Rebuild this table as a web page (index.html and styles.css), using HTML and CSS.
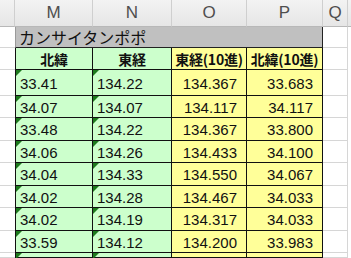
FILE: index.html
```html
<!DOCTYPE html>
<html lang="ja">
<head>
<meta charset="utf-8">
<link rel="stylesheet" href="styles.css">
</head>
<body>
<div class="sheet">
  <div class="ch corner"></div>
  <div class="ch">M</div>
  <div class="ch">N</div>
  <div class="ch">O</div>
  <div class="ch">P</div>
  <div class="ch">Q</div>
  <div class="ch rest"></div>

  <div class="lc"></div>
  <div class="title">カンサイタンポポ</div>
  <div class="q"></div>
  <div class="rest"></div>

  <div class="lc"></div>
  <div class="hd g first">北緯</div>
  <div class="hd g">東経</div>
  <div class="hd y">東経(10進)</div>
  <div class="hd y">北緯(10進)</div>
  <div class="q"></div>
  <div class="rest"></div>

  <div class="lc"></div><div class="d g first tri">33.41</div><div class="d g tri">134.22</div><div class="d y num">134.367</div><div class="d y num">33.683</div><div class="q"></div><div class="rest"></div>
  <div class="lc"></div><div class="d g first tri">34.07</div><div class="d g tri">134.07</div><div class="d y num">134.117</div><div class="d y num">34.117</div><div class="q"></div><div class="rest"></div>
  <div class="lc"></div><div class="d g first tri">33.48</div><div class="d g tri">134.22</div><div class="d y num">134.367</div><div class="d y num">33.800</div><div class="q"></div><div class="rest"></div>
  <div class="lc"></div><div class="d g first tri">34.06</div><div class="d g tri">134.26</div><div class="d y num">134.433</div><div class="d y num">34.100</div><div class="q"></div><div class="rest"></div>
  <div class="lc"></div><div class="d g first tri">34.04</div><div class="d g tri">134.33</div><div class="d y num">134.550</div><div class="d y num">34.067</div><div class="q"></div><div class="rest"></div>
  <div class="lc"></div><div class="d g first tri">34.02</div><div class="d g tri">134.28</div><div class="d y num">134.467</div><div class="d y num">34.033</div><div class="q"></div><div class="rest"></div>
  <div class="lc"></div><div class="d g first tri">34.02</div><div class="d g tri">134.19</div><div class="d y num">134.317</div><div class="d y num">34.033</div><div class="q"></div><div class="rest"></div>
  <div class="lc"></div><div class="d g first tri">33.59</div><div class="d g tri">134.12</div><div class="d y num">134.200</div><div class="d y num">33.983</div><div class="q"></div><div class="rest"></div>
  <div class="lc"></div><div class="d g first tri"></div><div class="d g tri"></div><div class="d y num"></div><div class="d y num"></div><div class="q"></div><div class="rest"></div>
</div>
</body>
</html>
```

FILE: styles.css
```css
* { box-sizing: border-box; }
html, body { margin: 0; padding: 0; background: #fff; overflow: hidden; }
body { width: 351px; height: 258px; }

.sheet {
  display: grid;
  grid-template-columns: 15px 78px 79px 75px 76px 25px 3px;
  grid-template-rows: 27px 21px 22px 26px 22px 23px 22px 23px 22px 23px 22px 5px;
  height: 258px;
  overflow: hidden;
  font-family: "Liberation Sans", "Noto Sans CJK JP", sans-serif;
  color: #111;
}

.ch {
  background: linear-gradient(#f3f3f3, #e6e6e6);
  border-right: 1px solid #cfcfcf;
  border-bottom: 1px solid #b8b8b8;
  color: #4e4e4e;
  font-size: 17px;
  display: flex;
  align-items: center;
  justify-content: center;
  padding-bottom: 1px;
}
.ch.rest { border-right: none; }

.lc {
  border-bottom: 1px solid #d6d6d6;
}

.title {
  grid-column: 2 / span 4;
  background: #c0c0c0;
  border-left: 1px solid #9a9a9a;
  border-right: 1px solid #222;
  border-bottom: 1px solid #222;
  font-family: "Noto Sans CJK JP", sans-serif;
  font-size: 16px;
  line-height: 20px;
  padding-left: 3px;
  white-space: nowrap;
}

.q {
  border-right: 1px solid #d6d6d6;
  border-bottom: 1px solid #d6d6d6;
}

.hd, .d {
  border-right: 1px solid #111;
  border-bottom: 1px solid #111;
  position: relative;
  white-space: nowrap;
}
.first { border-left: 1px solid #111; }
.g { background: #ccffcc; }
.y { background: #ffff99; }

.hd {
  font-family: "Noto Sans CJK JP", sans-serif;
  font-weight: 700;
  font-size: 14px;
  display: flex;
  align-items: center;
  justify-content: center;
  letter-spacing: -0.2px;
}

.d {
  font-size: 15px;
  display: flex;
  align-items: center;
  padding-left: 4px;
  padding-top: 1px;
}
.num {
  justify-content: flex-end;
  padding-left: 0;
  padding-right: 9px;
}
.tri::before {
  content: "";
  position: absolute;
  left: 0;
  top: 0;
  border-top: 6px solid #1d7a1d;
  border-right: 6px solid transparent;
}
```
